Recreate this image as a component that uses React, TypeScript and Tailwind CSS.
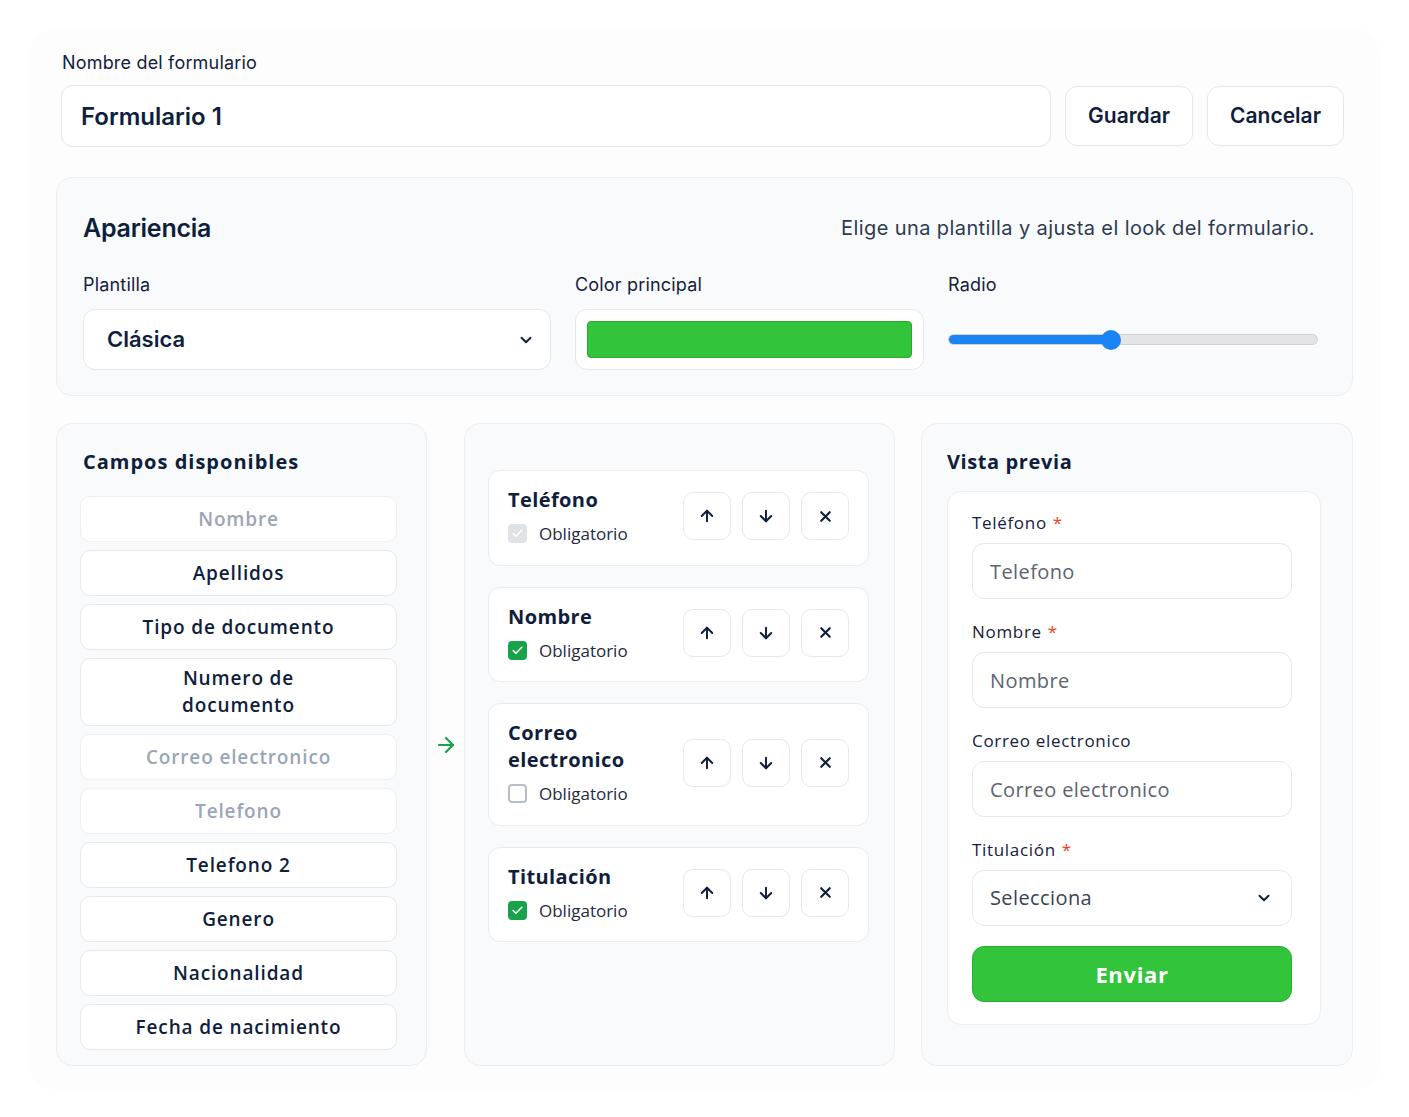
import React, { useState } from 'react';
import { ArrowUp, ArrowDown, X, ChevronDown, ArrowRight, Check } from 'lucide-react';

type Campo = { label: string; used: boolean };

const disponibles: Campo[] = [
  { label: 'Nombre', used: true },
  { label: 'Apellidos', used: false },
  { label: 'Tipo de documento', used: false },
  { label: 'Numero de documento', used: false },
  { label: 'Correo electronico', used: true },
  { label: 'Telefono', used: true },
  { label: 'Telefono 2', used: false },
  { label: 'Genero', used: false },
  { label: 'Nacionalidad', used: false },
  { label: 'Fecha de nacimiento', used: false },
];

type Seleccionado = { label: string; required: boolean; locked?: boolean };

const iniciales: Seleccionado[] = [
  { label: 'Teléfono', required: true, locked: true },
  { label: 'Nombre', required: true },
  { label: 'Correo electronico', required: false },
  { label: 'Titulación', required: true },
];

const wide = { fontFamily: '"Open Sans", "Noto Sans", sans-serif' };

const Casilla: React.FC<{ checked: boolean; locked?: boolean }> = ({ checked, locked }) => {
  if (locked) {
    return (
      <span className="w-[19px] h-[19px] rounded-[4px] bg-[#dfe2e6] flex items-center justify-center">
        <Check size={13} strokeWidth={3} className="text-white" />
      </span>
    );
  }
  if (checked) {
    return (
      <span className="w-[19px] h-[19px] rounded-[4px] bg-[#16a34a] flex items-center justify-center">
        <Check size={13} strokeWidth={3} className="text-white" />
      </span>
    );
  }
  return <span className="w-[19px] h-[19px] rounded-[4px] border-2 border-[#b8bec6] bg-white" />;
};

const BotonIcono: React.FC<{ children: React.ReactNode }> = ({ children }) => (
  <button className="w-[48px] h-[48px] rounded-[10px] border border-[#e6e8ec] bg-white flex items-center justify-center text-[#0f1e3c]">
    {children}
  </button>
);

const App: React.FC = () => {
  const [nombre, setNombre] = useState('Formulario 1');
  const [campos] = useState(iniciales);
  const [radio, setRadio] = useState(44);

  return (
    <div className="min-h-screen bg-white p-[28px]" style={{ fontFamily: 'Inter, "Noto Sans", sans-serif' }}>
      <div className="rounded-[28px] bg-[#fdfdfd] px-[28px] pt-[22px] pb-[24px] text-[#0f1e3c]">
        {/* nombre + acciones */}
        <label className="block text-[18px] leading-[26px] ml-[6px] text-[#14213d] tracking-[0.01em]">Nombre del formulario</label>
        <div className="flex items-center gap-[14px] mt-[9px] ml-[5px] mr-[9px]">
          <input
            value={nombre}
            onChange={(e) => setNombre(e.target.value)}
            className="flex-1 h-[62px] rounded-[12px] border border-[#e4e7eb] bg-white px-[19px] text-[24px] font-semibold text-[#0f1e3c] outline-none"
          />
          <button className="h-[60px] px-[22px] rounded-[12px] border border-[#e4e7eb] bg-white text-[21px] font-semibold">Guardar</button>
          <button className="h-[60px] px-[22px] rounded-[12px] border border-[#e4e7eb] bg-white text-[21px] font-semibold">Cancelar</button>
        </div>

        {/* apariencia */}
        <section className="mt-[30px] rounded-[16px] border border-[#eceef1] bg-[#f9fafb] px-[26px] pt-[34px] pb-[25px]">
          <div className="flex items-center justify-between">
            <h2 className="text-[25px] font-semibold leading-[32px] tracking-[-0.01em]">Apariencia</h2>
            <p className="text-[20px] text-[#2d3a52] mr-[11px] tracking-[0.02em]">Elige una plantilla y ajusta el look del formulario.</p>
          </div>
          <div className="flex mt-[28px] gap-[24px]">
            <div className="w-[468px]">
              <div className="text-[18px] leading-[26px] text-[#14213d] tracking-[0.01em]">Plantilla</div>
              <div className="mt-[11px] h-[61px] rounded-[12px] border border-[#e4e7eb] bg-white flex items-center justify-between pl-[23px] pr-[15px]">
                <span className="text-[22px] font-semibold">Clásica</span>
                <ChevronDown size={18} strokeWidth={2.5} />
              </div>
            </div>
            <div className="w-[349px]">
              <div className="text-[18px] leading-[26px] text-[#14213d] tracking-[0.01em]">Color principal</div>
              <div className="mt-[11px] h-[61px] rounded-[12px] border border-[#e4e7eb] bg-white p-[11px]">
                <div className="h-full rounded-[4px] bg-[#32c43b] border border-[#25a92e]" />
              </div>
            </div>
            <div className="flex-1 pr-[8px]">
              <div className="text-[18px] leading-[26px] text-[#14213d] tracking-[0.01em]">Radio</div>
              <div className="mt-[11px] h-[61px] relative flex items-center">
                <div className="w-full h-[11px] rounded-full bg-[#e4e4e6] border border-[#cfd1d4] overflow-hidden">
                  <div className="h-full bg-[#1a84f5]" style={{ width: `${radio}%` }} />
                </div>
                <input
                  type="range"
                  min={0}
                  max={100}
                  value={radio}
                  onChange={(e) => setRadio(Number(e.target.value))}
                  className="absolute inset-0 opacity-0"
                />
                <div
                  className="absolute w-[20px] h-[20px] rounded-full bg-[#1a84f5] -translate-x-1/2"
                  style={{ left: `${radio}%` }}
                />
              </div>
            </div>
          </div>
        </section>

        {/* constructor */}
        <div className="flex mt-[27px] items-stretch" style={wide}>
          <section className="w-[371px] rounded-[16px] border border-[#eceef1] bg-[#f9fafb] pt-[24px] pb-[14px] pl-[23px] pr-[29px]">
            <h3 className="text-[20px] font-bold leading-[28px] ml-[3px] tracking-[0.05em]">Campos disponibles</h3>
            <div className="mt-[20px] flex flex-col gap-[8px]">
              {disponibles.map((c) => (
                <div
                  key={c.label}
                  className={`min-h-[46px] rounded-[10px] border bg-white flex items-center justify-center text-center px-[46px] py-[6px] text-[19px] font-semibold leading-[27px] tracking-[0.045em] ${
                    c.used ? 'border-[#eef0f2] text-[#9aa6b8]' : 'border-[#e6e8ec] text-[#0f1e3c]'
                  }`}
                >
                  {c.label}
                </div>
              ))}
            </div>
          </section>

          <div className="w-[37px] flex items-center justify-center">
            <ArrowRight size={24} strokeWidth={2.2} className="text-[#16a34a]" />
          </div>

          <section className="w-[431px] rounded-[16px] border border-[#eceef1] bg-[#f9fafb] pt-[46px] pl-[23px] pr-[25px]">
            <div className="flex flex-col gap-[21px]">
              {campos.map((c) => (
                <div key={c.label} className="rounded-[12px] border border-[#e9ebee] bg-white pl-[19px] pr-[19px] pt-[15px] pb-[18px] flex items-center justify-between">
                  <div>
                    <div className="text-[20px] font-bold leading-[27px] max-w-[140px] tracking-[0.02em]">{c.label}</div>
                    <div className="flex items-center gap-[12px] mt-[8px]">
                      <Casilla checked={c.required} locked={c.locked} />
                      <span className="text-[17px] text-[#1e2a44]">Obligatorio</span>
                    </div>
                  </div>
                  <div className="flex gap-[11px]">
                    <BotonIcono><ArrowUp size={18} strokeWidth={2.6} /></BotonIcono>
                    <BotonIcono><ArrowDown size={18} strokeWidth={2.6} /></BotonIcono>
                    <BotonIcono><X size={17} strokeWidth={3} /></BotonIcono>
                  </div>
                </div>
              ))}
            </div>
          </section>

          <section className="flex-1 ml-[26px] rounded-[16px] border border-[#eceef1] bg-[#f9fafb] pt-[24px] pb-[40px] pl-[25px] pr-[31px]">
            <h3 className="text-[20px] font-bold leading-[28px] tracking-[0.03em]">Vista previa</h3>
            <div className="mt-[15px] rounded-[14px] border border-[#eceef1] bg-white pl-[24px] pr-[28px] pt-[20px] pb-[22px]">
              {[
                { label: 'Teléfono', ph: 'Telefono', req: true },
                { label: 'Nombre', ph: 'Nombre', req: true },
                { label: 'Correo electronico', ph: 'Correo electronico', req: false },
              ].map((f) => (
                <div key={f.label} className="mb-[22px]">
                  <div className="text-[17px] leading-[22px] text-[#14213d] tracking-[0.04em]">
                    {f.label}
                    {f.req && <span className="text-[#f0441d] ml-[6px]">*</span>}
                  </div>
                  <input
                    placeholder={f.ph}
                    className="mt-[9px] w-full h-[56px] rounded-[12px] border border-[#e4e7eb] px-[17px] text-[20px] tracking-[0.02em] placeholder:text-[#5d6470] outline-none"
                  />
                </div>
              ))}
              <div className="text-[17px] leading-[22px] text-[#14213d] tracking-[0.04em]">
                Titulación<span className="text-[#f0441d] ml-[6px]">*</span>
              </div>
              <div className="mt-[9px] h-[56px] rounded-[12px] border border-[#e4e7eb] flex items-center justify-between pl-[17px] pr-[18px]">
                <span className="text-[20px] text-[#3a4252] tracking-[0.02em]">Selecciona</span>
                <ChevronDown size={18} strokeWidth={2.6} />
              </div>
              <button className="mt-[20px] w-full h-[56px] rounded-[12px] bg-[#32c43b] border border-[#26b02f] text-white text-[22px] font-bold tracking-[0.03em]">
                Enviar
              </button>
            </div>
          </section>
        </div>
      </div>
    </div>
  );
};

export default App;
